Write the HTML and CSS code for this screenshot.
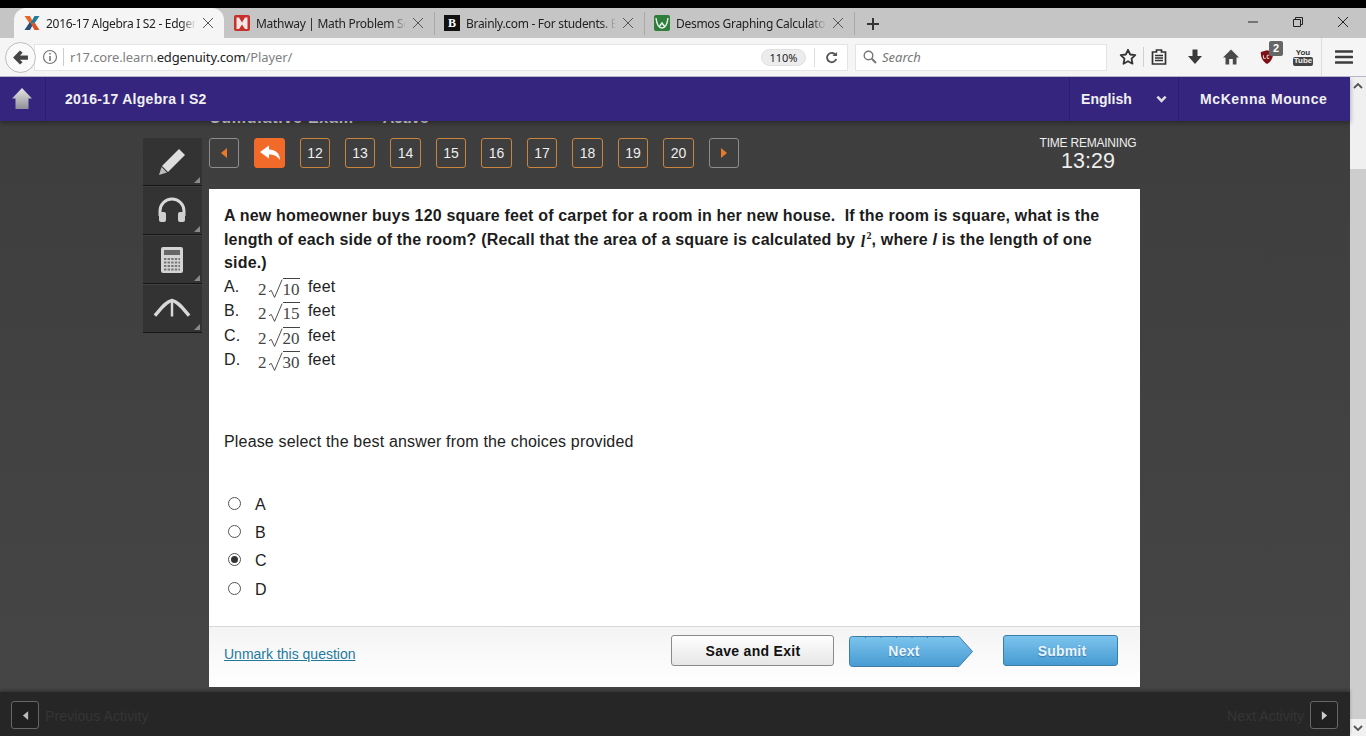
FILE: index.html
```html
<!DOCTYPE html>
<html lang="en">
<head>
<meta charset="utf-8">
<title>2016-17 Algebra I S2 - Edgenuity</title>
<link rel="stylesheet" href="styles.css">
</head>
<body>
<div class="window">
  <div class="tabstrip">
    <div class="tab active">
      <svg class="fav" viewBox="0 0 16 16"><path d="M0.5 1 L6 1 L9.5 8 L6 9Z" fill="#e8662a"/><path d="M15.5 1 L10.5 1 L6.5 8 L10 9Z" fill="#1f7d9c"/><path d="M0.5 15 L6 15 L9 9.5 L5.5 7.5Z" fill="#25507c"/><path d="M15.5 15 L10.5 15 L7 9 L10.5 7.5Z" fill="#d9532a"/></svg>
      <span class="tab-title">2016-17 Algebra I S2 - Edgenuity</span>
      <svg class="close" viewBox="0 0 12 12"><path d="M1 1 L11 11 M11 1 L1 11"/></svg>
    </div>
    <div class="tab">
      <svg class="fav" viewBox="0 0 16 16"><rect width="16" height="16" rx="2" fill="#c8302c"/><path d="M2.5 14 V2.5 H5 L8 7.5 L11 2.5 H13.5 V14 H11 L8 9.5 L5 14Z" fill="#f4e6e4"/></svg>
      <span class="tab-title">Mathway | Math Problem Solver</span>
      <svg class="close" viewBox="0 0 12 12"><path d="M1 1 L11 11 M11 1 L1 11"/></svg>
    </div>
    <div class="tab">
      <span class="fav-b">B</span>
      <span class="tab-title">Brainly.com - For students. By students.</span>
      <svg class="close" viewBox="0 0 12 12"><path d="M1 1 L11 11 M11 1 L1 11"/></svg>
    </div>
    <div class="tab">
      <svg class="fav" viewBox="0 0 16 16"><rect width="16" height="16" rx="2" fill="#2f7d3b"/><path d="M2 3 C3 11 6 13 8 13 C10 13 13 11 14 3 M5 12 L8 8 L11 12" fill="none" stroke="#e9f4ea" stroke-width="1.4"/></svg>
      <span class="tab-title">Desmos Graphing Calculator</span>
      <svg class="close" viewBox="0 0 12 12"><path d="M1 1 L11 11 M11 1 L1 11"/></svg>
    </div>
    <svg class="newtab" viewBox="0 0 12 12"><path d="M6 0 V12 M0 6 H12"/></svg>
    <div class="winctl">
      <svg viewBox="0 0 12 12"><path d="M1 6 H11"/></svg>
      <svg viewBox="0 0 12 12"><path d="M1.5 3.5 H8.5 V10.5 H1.5Z M3.5 3.5 V1.5 H10.5 V8.5 H8.5"/></svg>
      <svg viewBox="0 0 12 12"><path d="M1 1 L11 11 M11 1 L1 11"/></svg>
    </div>
  </div>
  <div class="toolbar">
    <div class="back"><svg viewBox="0 0 16 16"><path d="M1 8 L7.5 1.5 L10 3.5 L7.5 6 H15 V10 H7.5 L10 12.5 L7.5 14.5Z" fill="#444"/></svg></div>
    <div class="urlbar">
      <svg class="info" viewBox="0 0 16 16"><circle cx="8" cy="8" r="6.5" fill="none" stroke="#777" stroke-width="1.2"/><path d="M8 7 V12 M8 4 V5.6" stroke="#777" stroke-width="1.6"/></svg>
      <span class="url">r17.core.learn.<b>edgenuity.com</b>/Player/</span>
      <span class="zoompill">110%</span>
      <span class="reload"><svg viewBox="0 0 14 14"><path d="M11.5 4.5 A5 5 0 1 0 12 8.5" fill="none" stroke="#555" stroke-width="2"/><path d="M8 5.5 H13 V1Z" fill="#555"/></svg></span>
    </div>
    <div class="searchbar">
      <svg viewBox="0 0 14 14"><circle cx="5.5" cy="5.5" r="4.3" fill="none" stroke="#777" stroke-width="1.4"/><path d="M8.8 8.8 L13 13" stroke="#777" stroke-width="2"/></svg>
      <span>Search</span>
    </div>
    <div class="tools">
      <span class="tool tool-star"><svg viewBox="0 0 18 18"><path d="M9 1.8 L11.2 6.5 L16.3 7.1 L12.5 10.6 L13.5 15.7 L9 13.2 L4.5 15.7 L5.5 10.6 L1.7 7.1 L6.8 6.5Z" fill="none" stroke="#333" stroke-width="1.8" stroke-linejoin="round"/></svg></span>
      <span class="tool tool-clip"><svg viewBox="0 0 18 18"><path d="M2.5 4 H6.5 V2 H11.5 V4 H15.5 V16 H2.5Z" fill="none" stroke="#333" stroke-width="1.7"/><path d="M5 7.5 H13 M5 10 H13 M5 12.5 H13" stroke="#333" stroke-width="1.5"/></svg></span>
      <span class="tool"><svg viewBox="0 0 18 18"><path d="M6.5 1.5 H11.5 V8 H16 L9 16 L2 8 H6.5Z" fill="#3a3a3a"/></svg></span>
      <span class="tool"><svg viewBox="0 0 18 18"><path d="M9 1.5 L17 9.5 H14.5 V16.5 H10.8 V11 H7.2 V16.5 H3.5 V9.5 H1Z" fill="#4a4a4a"/></svg></span>
      <span class="tool tool-ub">
        <svg viewBox="0 0 18 18"><path d="M9 1.5 L16 3.5 C16 10 14 14 9 17 C4 14 2 10 2 3.5Z" fill="#7c1215"/><path d="M5 7 V10.5 H7.5 M11.5 7 H9.2 V10.5 H11.5" fill="none" stroke="#eee" stroke-width="1"/></svg>
        <span class="badge">2</span>
      </span>
      <span class="tool"><span class="yt"><span>You</span><span class="yt-tube">Tube</span></span></span>
      <span class="menu"><svg viewBox="0 0 18 18"><path d="M1 3.5 H17 M1 9 H17 M1 14.5 H17" stroke="#3c3c3c" stroke-width="2.6" stroke-linecap="round"/></svg></span>
    </div>
  </div>
  <div class="viewport">
    <div class="page">
      <header class="apphead">
        <div class="home"><svg viewBox="0 0 20 22"><defs><linearGradient id="homeg" x1="0" y1="0" x2="0" y2="1"><stop offset="0" stop-color="#e6e6e6"/><stop offset="1" stop-color="#8f8f98"/></linearGradient></defs><path d="M10 0 L20 10.5 H16.5 V21 H3.5 V10.5 H0Z" fill="url(#homeg)"/></svg></div>
        <div class="course">2016-17 Algebra I S2</div>
        <div class="lang">English<svg viewBox="0 0 12 8"><path d="M1.5 1.5 L6 6 L10.5 1.5" fill="none" stroke="#ddd" stroke-width="2.8"/></svg></div>
        <div class="user">McKenna Mounce</div>
      </header>
      <main class="main">
        <nav class="tiles">
          <div class="tile"><svg viewBox="0 0 32 32"><path d="M23 3 L29 9 L12 26 L6 20Z" fill="#dedede"/><path d="M5.5 21 L11 26.5 L3 29Z" fill="#bbb"/></svg></div>
          <div class="tile"><svg viewBox="0 0 32 32"><path d="M4 21 V16 A12 12 0 0 1 28 16 V21" fill="none" stroke="#d8d8d8" stroke-width="3"/><rect x="3" y="17" width="7" height="10" rx="2" fill="#cfcfcf"/><rect x="22" y="17" width="7" height="10" rx="2" fill="#cfcfcf"/></svg></div>
          <div class="tile"><svg viewBox="0 0 32 32"><rect x="5" y="3" width="22" height="26" rx="2" fill="#d4d4d4"/><rect x="8" y="6" width="16" height="5" fill="#666"/><path d="M8 15 H24 M8 18.5 H24 M8 22 H24 M8 25.5 H24" stroke="#777" stroke-width="2" stroke-dasharray="2.4 1.2"/></svg></div>
          <div class="tile tile-arch"><svg viewBox="0 0 40 32"><path d="M2 25 C9 17 14 10 20 9 C26 10 31 17 38 25" fill="none" stroke="#d8d8d8" stroke-width="3.6"/><path d="M20 9 V26" stroke="#d8d8d8" stroke-width="2.6"/></svg></div>
        </nav>
        <div class="exam">
          <div class="crumb"><span>Cumulative Exam</span><span class="crumb-state">Active</span></div>
          <div class="examtop">
            <div class="qnav">
              <span class="qbtn arrow"><svg viewBox="0 0 8 12"><path d="M7 1 V11 L1 6Z" fill="#e8792a"/></svg></span>
              <span class="qbtn ret"><svg viewBox="0 0 22 16"><path d="M1 7 L10 0.5 V4.5 C16 4.5 21 8 21 15 C18 11 15 9.5 10 9.5 V13.5Z" fill="#fff"/></svg></span>
              <span class="qbtn">12</span>
              <span class="qbtn">13</span>
              <span class="qbtn">14</span>
              <span class="qbtn">15</span>
              <span class="qbtn">16</span>
              <span class="qbtn">17</span>
              <span class="qbtn">18</span>
              <span class="qbtn">19</span>
              <span class="qbtn">20</span>
              <span class="qbtn arrow"><svg viewBox="0 0 8 12"><path d="M1 1 V11 L7 6Z" fill="#e8792a"/></svg></span>
            </div>
            <div class="timer"><div class="timer-label">TIME REMAINING</div><div class="timer-value">13:29</div></div>
          </div>
          <section class="card">
            <div class="card-body">
              <p class="question">A new homeowner buys 120 square feet of carpet for a room in her new house.&nbsp; If the room is square, what is the length of each side of the room? (Recall that the area of a square is calculated by <span class="ell"><span class="ell-l">l</span><span class="ell-2">2</span></span>, where <i>l</i> is the length of one side.)</p>
              <div class="choice"><span class="choice-l">A.</span><span class="math">2<svg viewBox="0 0 16 22"><path d="M1 14 L3.5 12.5 L7 20 L15 1" fill="none" stroke="#444" stroke-width="1"/></svg><span class="radicand">10</span></span><span>feet</span></div>
              <div class="choice"><span class="choice-l">B.</span><span class="math">2<svg viewBox="0 0 16 22"><path d="M1 14 L3.5 12.5 L7 20 L15 1" fill="none" stroke="#444" stroke-width="1"/></svg><span class="radicand">15</span></span><span>feet</span></div>
              <div class="choice"><span class="choice-l">C.</span><span class="math">2<svg viewBox="0 0 16 22"><path d="M1 14 L3.5 12.5 L7 20 L15 1" fill="none" stroke="#444" stroke-width="1"/></svg><span class="radicand">20</span></span><span>feet</span></div>
              <div class="choice"><span class="choice-l">D.</span><span class="math">2<svg viewBox="0 0 16 22"><path d="M1 14 L3.5 12.5 L7 20 L15 1" fill="none" stroke="#444" stroke-width="1"/></svg><span class="radicand">30</span></span><span>feet</span></div>
              <p class="prompt">Please select the best answer from the choices provided</p>
              <div class="answers">
                <div class="answer"><span class="radio"></span>A</div>
                <div class="answer"><span class="radio"></span>B</div>
                <div class="answer"><span class="radio checked"></span>C</div>
                <div class="answer"><span class="radio"></span>D</div>
              </div>
            </div>
            <div class="card-foot">
              <a class="unmark" href="#">Unmark this question</a>
              <span class="btn btn-save">Save and Exit</span>
              <span class="btn-next"><svg viewBox="0 0 124 31" preserveAspectRatio="none"><defs><linearGradient id="nextg" x1="0" y1="0" x2="0" y2="1"><stop offset="0" stop-color="#7cc4ee"/><stop offset="1" stop-color="#479bd2"/></linearGradient></defs><path d="M3.5 .5 H110 L123.5 15.5 L110 30.5 H3.5 Q.5 30.5 .5 27.5 V3.5 Q.5 .5 3.5 .5Z" fill="url(#nextg)" stroke="#3d7ea8"/><path d="M16 1.5 H96" stroke="#3d7ea8" stroke-dasharray="1 14.5"/></svg><span>Next</span></span>
              <span class="btn btn-submit">Submit</span>
            </div>
          </section>
        </div>
      </main>
      <footer class="appfoot">
        <span class="footbtn"><svg viewBox="0 0 8 12"><path d="M7 1 V11 L1 6Z" fill="#bbb"/></svg></span>
        <span class="foottext">Previous Activity</span>
        <span class="foottext foot-right">Next Activity</span>
        <span class="footbtn"><svg viewBox="0 0 8 12"><path d="M1 1 V11 L7 6Z" fill="#ccc"/></svg></span>
      </footer>
    </div>
    <div class="scrollbar">
      <span class="sb-btn"><svg viewBox="0 0 10 8"><path d="M1 6 L5 2 L9 6" fill="none" stroke="#555" stroke-width="1.8"/></svg></span>
      <span class="sb-gap"></span>
      <span class="sb-thumb"></span>
      <span class="sb-btn sb-down"><svg viewBox="0 0 10 8"><path d="M1 2 L5 6 L9 2" fill="none" stroke="#555" stroke-width="1.8"/></svg></span>
    </div>
  </div>
</div>
</body>
</html>
```
FILE: styles.css
```css
* { box-sizing: border-box; }
html, body { margin: 0; padding: 0; }
body { background: #000; font-family: "Liberation Sans", Arial, sans-serif; overflow: hidden; }
.window { width: 1366px; height: 736px; padding-top: 8px; display: flex; flex-direction: column; overflow: hidden; background: #000; }

/* tabs */
.tabstrip { height: 30px; flex: none; background: #c5c5c5; display: flex; align-items: stretch; padding-left: 14px; font-family: "Noto Sans", sans-serif; font-size: 12px; color: #222; }
.tab { width: 210px; display: flex; align-items: center; gap: 6px; padding: 0 10px; position: relative; }
.tab + .tab::after { content: ""; position: absolute; right: -1px; top: 4px; bottom: 3px; width: 1px; background: #a9a9a9; }
.tab.active { background: #f5f5f5; border-radius: 12px 12px 0 0; }
.fav { width: 16px; height: 16px; flex: none; }
.fav-b { width: 16px; height: 16px; flex: none; background: #111; color: #fff; font: bold 12px/16px "Liberation Serif", serif; text-align: center; }
.tab-title { flex: 1; min-width: 0; white-space: nowrap; overflow: hidden; letter-spacing: -0.3px; -webkit-mask-image: linear-gradient(90deg, #000 90%, transparent 100%); mask-image: linear-gradient(90deg, #000 90%, transparent 100%); }
.close { width: 12px; height: 12px; flex: none; }
.close path { stroke: #555; stroke-width: 1; fill: none; }
.newtab { width: 12px; height: 12px; margin: 10px 0 0 13px; }
.newtab path { stroke: #333; stroke-width: 2; }
.winctl { margin-left: auto; display: flex; align-items: flex-start; gap: 33px; padding: 8px 17px 0 0; }
.winctl svg { width: 12px; height: 12px; }
.winctl path { stroke: #222; stroke-width: 1; fill: none; }

/* toolbar */
.toolbar { height: 39px; flex: none; background: #f5f5f5; border-bottom: 1px solid #b9b5c9; display: flex; align-items: center; padding-left: 5px; font-family: "Noto Sans", sans-serif; position: relative; z-index: 3; }
.back { width: 31px; height: 31px; flex: none; border-radius: 50%; background: #fafafa; border: 1px solid #bdbdbd; display: flex; align-items: center; justify-content: center; position: relative; z-index: 1; }
.back svg { width: 17px; height: 17px; }
.urlbar { flex: none; width: 814px; height: 27px; margin-left: -2px; background: #fff; border: 1px solid #e4e4e4; display: flex; align-items: center; padding-left: 7px; font-size: 13px; }
.info { width: 16px; height: 16px; flex: none; }
.url { margin-left: 5px; padding-left: 6px; border-left: 1px solid #ccc; line-height: 18px; color: #808080; flex: 1; white-space: nowrap; letter-spacing: -0.13px; }
.url b { font-weight: 400; color: #222; }
.zoompill { width: 45px; height: 17px; flex: none; border-radius: 9px; background: #ececec; border: 1px solid #e0e0e0; font-size: 11px; line-height: 15px; text-align: center; color: #222; }
.reload { width: 33px; flex: none; margin-left: 8px; height: 19px; border-left: 1px solid #ddd; display: flex; align-items: center; justify-content: center; }
.reload svg { width: 13px; height: 13px; }
.searchbar { flex: none; width: 252px; height: 27px; margin-left: 7px; background: #fff; border: 1px solid #e4e4e4; display: flex; align-items: center; gap: 5px; padding-left: 7px; font-size: 13px; font-style: italic; color: #777; }
.searchbar svg { width: 14px; height: 14px; }
.tools { display: flex; align-items: center; height: 100%; margin-left: 6px; }
.tool { width: 36px; height: 20px; flex: none; display: flex; align-items: center; justify-content: center; position: relative; }
.tool svg { width: 18px; height: 18px; }
.tool-star { width: 31px; padding-right: 1px; border-right: 1px solid #d0d0d0; }
.tool-clip { width: 33px; padding-right: 3px; }
.tool-ub svg { width: 16px; height: 16px; }
.badge { position: absolute; top: -6px; right: 2px; width: 14px; height: 15px; background: #666; color: #fff; border-radius: 2px; font: bold 11px/15px "Liberation Sans", sans-serif; text-align: center; }
.yt { display: flex; flex-direction: column; align-items: center; font: bold 8px/8.5px "Liberation Sans", sans-serif; color: #333; }
.yt-tube { background: #444; color: #eee; border-radius: 2px; padding: 0 1px; }
.menu { width: 45px; height: 38px; flex: none; border-left: 1px solid #ddd; display: flex; align-items: center; justify-content: center; }
.menu svg { width: 18px; height: 18px; }

/* page */
.viewport { flex: 1; min-height: 0; display: flex; }
.page { width: 1350px; flex: none; display: flex; flex-direction: column; }
.apphead { height: 44px; flex: none; background: #35257f; display: flex; align-items: center; color: #f0f0f0; font-weight: 700; font-size: 14px; letter-spacing: 0.3px; position: relative; z-index: 2; box-shadow: 0 2px 5px rgba(0,0,0,.35); }
.home { width: 46px; height: 100%; flex: none; border-right: 1px solid #2c1f6e; display: flex; align-items: center; justify-content: center; padding-right: 1px; }
.home svg { width: 20px; height: 22px; }
.course { flex: 1; padding: 0 0 1px 19px; }
.lang { width: 109px; height: 100%; flex: none; border-left: 1px solid #2c1f6e; display: flex; align-items: center; padding: 0 0 1px 11px; letter-spacing: 0.05px; }
.lang svg { width: 11px; height: 8px; margin-left: 24px; }
.user { width: 172px; height: 100%; flex: none; border-left: 1px solid #2c1f6e; display: flex; align-items: center; padding: 0 0 1px 21px; letter-spacing: 0.6px; }
.main { flex: 1; min-height: 0; overflow: hidden; background: linear-gradient(#3e3e3e, #454545); display: flex; padding: 17px 0 0 143px; gap: 7px; }
.tiles { width: 59px; flex: none; display: flex; flex-direction: column; }
.tile { height: 48px; margin-bottom: 1px; padding-right: 2px; background: #333; border-bottom: 1px solid #161616; display: flex; align-items: center; justify-content: center; position: relative; }
.tile::after { content: ""; position: absolute; right: 2px; bottom: 2px; border: 3px solid transparent; border-right-color: #8a8a8a; border-bottom-color: #8a8a8a; }
.tile svg { width: 32px; height: 32px; }
.tile-arch { padding-bottom: 4px; }
.tile-arch svg { width: 38px; }
.exam { width: 931px; flex: none; display: flex; flex-direction: column; }
.crumb { height: 30px; margin-top: -30px; flex: none; display: flex; gap: 29px; font-size: 16px; font-weight: 700; line-height: 20px; color: #ddd; letter-spacing: 0.75px; }
.crumb-state { letter-spacing: -0.4px; }
.examtop { height: 51px; flex: none; display: flex; justify-content: space-between; }
.qnav { display: grid; grid-template-columns: 30px 31px 30px 30px 31px 30px 31px 30px 31px 30px 31px 30px; column-gap: 15px; height: 30px; }
.qbtn { border: 1px solid #c9843e; border-radius: 3px; color: #eee; font-size: 14px; display: flex; align-items: center; justify-content: center; }
.qbtn.arrow { border-color: #8d8d8d; }
.qbtn.arrow svg { width: 8px; height: 12px; }
.qbtn.ret { background: #f26a2a; border-color: #f26a2a; }
.qbtn.ret svg { width: 22px; height: 16px; }
.timer { width: 104px; color: #eee; text-align: center; margin-top: -2px; }
.timer-label { font-size: 12px; line-height: 14px; letter-spacing: -0.22px; }
.timer-value { font-size: 21.5px; line-height: 23px; }

/* card */
.card { flex: none; height: 498px; background: #fff; display: flex; flex-direction: column; color: #222; font-size: 16px; letter-spacing: 0.17px; }
.card-body { flex: 1; padding: 15px 15px 0; }
.question { margin: 0; font-weight: 700; line-height: 23.5px; color: #1c1c1c; letter-spacing: 0.17px; }
.ell { font: italic 700 16px "Liberation Serif", serif; margin-left: 1px; }
.ell-l { position: relative; top: 2px; }
.ell-2 { font-size: 10px; position: relative; top: -6px; margin-left: 1px; font-style: normal; }
.choice { height: 24.5px; display: flex; align-items: center; }
.choice-l { width: 34px; flex: none; }
.math { width: 50px; height: 24.5px; flex: none; display: flex; align-items: flex-start; font: 17px/22px "Liberation Serif", serif; color: #444; padding-top: 4px; letter-spacing: 0; }
.math svg { width: 15px; height: 22px; flex: none; margin-top: -1px; margin-left: 1px; }
.radicand { border-top: 1px solid #444; height: 19px; margin-top: -1px; padding: 0; line-height: 22px; }
.prompt { margin: 57px 0 0; line-height: 24px; }
.answers { margin-top: 37px; }
.answer { height: 28.3px; display: flex; align-items: center; }
.radio { width: 13px; height: 13px; flex: none; margin: -3px 14px 0 4px; border-radius: 50%; border: 1px solid #555; background: #fff; position: relative; }
.radio.checked::after { content: ""; position: absolute; left: 2px; top: 2px; width: 7px; height: 7px; border-radius: 50%; background: #333; }
.card-foot { height: 61px; flex: none; border-top: 1px solid #d8d6dc; background: linear-gradient(#f4f4f4, #fff); display: flex; align-items: flex-start; padding: 8px 22px 0 15px; letter-spacing: 0; }
.unmark { margin-top: 11px; font-size: 14px; color: #1f7a9d; text-decoration: underline; margin-right: auto; }
.btn { height: 31px; flex: none; border-radius: 3px; display: flex; align-items: center; justify-content: center; font-size: 14px; font-weight: 700; letter-spacing: 0.3px; }
.btn-save { width: 163px; border: 1px solid #8a8a8a; background: linear-gradient(#fff, #e6e6e6); color: #111; padding-left: 1px; }
.btn-next { width: 124px; height: 31px; flex: none; margin: 0 30px 0 15px; position: relative; display: flex; align-items: center; justify-content: center; padding-right: 14px; color: #eaf5fb; font-size: 14px; font-weight: 700; letter-spacing: 0.3px; text-shadow: 0 1px 1px rgba(40,90,130,.6); }
.btn-next svg { position: absolute; left: 0; top: 1px; width: 100%; height: 100%; }
.btn-next span { position: relative; }
.btn-submit { width: 115px; border: 1px solid #3d7ea8; background: linear-gradient(#7cc4ee, #479bd2); color: #eaf5fb; padding-left: 3px; letter-spacing: 0.2px; text-shadow: 0 1px 1px rgba(40,90,130,.6); }

/* footer */
.appfoot { height: 44px; flex: none; background: #262626; display: flex; align-items: center; padding: 0 12px 0 11px; gap: 6px; box-shadow: 0 -2px 3px rgba(0,0,0,.25); position: relative; font-size: 14px; color: #353535; }
.footbtn { width: 28px; height: 28px; flex: none; border: 1px solid #666; border-radius: 3px; background: #202020; display: flex; align-items: center; justify-content: center; margin-top: 2px; }
.footbtn svg { width: 7px; height: 11px; }
.foottext { margin-top: 3px; letter-spacing: 0.1px; }
.foot-right { margin-left: auto; letter-spacing: 0.05px; }

/* scrollbar */
.scrollbar { width: 16px; flex: none; background: #f0f0f0; display: flex; flex-direction: column; }
.sb-btn { height: 18px; flex: none; display: flex; align-items: center; justify-content: center; }
.sb-btn svg { width: 10px; height: 8px; }
.sb-down { height: 17px; }
.sb-gap { height: 74px; flex: none; }
.sb-thumb { flex: 1; background: #cdcdcd; }
```
